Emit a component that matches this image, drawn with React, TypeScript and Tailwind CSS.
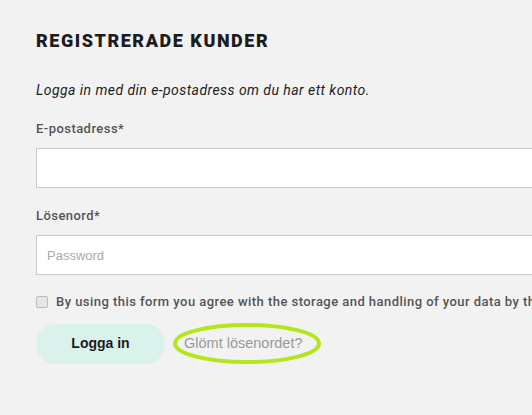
export default function App() {
  return (
    <div className="h-[415px] w-[532px] overflow-hidden bg-[#f2f2f2] font-['Roboto',sans-serif]">
      <div className="w-[640px] pl-9 pt-[29px]">
        {/* Heading */}
        <h2 className="text-[18px] font-black leading-6 tracking-[1.55px] text-[#1c1c1c]">
          REGISTRERADE KUNDER
        </h2>

        <p className="mt-[27px] text-[14px] italic leading-5 tracking-[0.45px] text-[#222]">
          Logga in med din e-postadress om du har ett konto.
        </p>

        {/* Email */}
        <label className="mt-[19px] block text-[13px] font-medium leading-5 tracking-[0.45px] text-[#555]">
          E-postadress*
        </label>
        <input
          type="text"
          className="mt-[9px] block h-10 w-full border border-[#c8c8c8] bg-white px-[10px] text-[13px] outline-none"
        />

        {/* Password */}
        <label className="mt-[18px] block text-[13px] font-medium leading-5 tracking-[0.45px] text-[#555]">
          Lösenord*
        </label>
        <input
          type="password"
          placeholder="Password"
          className="mt-[9px] block h-10 w-full border border-[#c8c8c8] bg-white px-[10px] text-[13px] outline-none placeholder:font-['Liberation_Sans',sans-serif] placeholder:text-[#aaa]"
        />

        {/* Consent */}
        <div className="mt-[17px] flex items-center gap-2">
          <span className="h-3 w-3 shrink-0 rounded-[2px] border border-[#bbb] bg-[#e6e6e6]" />
          <span className="whitespace-nowrap text-[13px] font-medium leading-5 tracking-[0.45px] text-[#555]">
            By using this form you agree with the storage and handling of your data by this website.
          </span>
        </div>

        {/* Actions */}
        <div className="mt-[11px] flex items-center">
          <button className="h-10 w-[129px] rounded-full bg-[#d9f2ec] font-['Liberation_Sans',sans-serif] text-[14px] font-bold text-[#1c1c1c]">
            Logga in
          </button>
          <div className="relative ml-[7px] flex h-[41px] w-[150px] items-center">
            <span className="pl-[12px] font-['Liberation_Sans',sans-serif] text-[14.5px] text-[#999]">
              Glömt lösenordet?
            </span>
            <svg className="absolute inset-0" width="150" height="41" viewBox="0 0 150 41">
              <ellipse cx="75" cy="20.5" rx="72" ry="18.5" fill="none" stroke="#b5e61d" strokeWidth="4" />
            </svg>
          </div>
        </div>
      </div>
    </div>
  );
}
